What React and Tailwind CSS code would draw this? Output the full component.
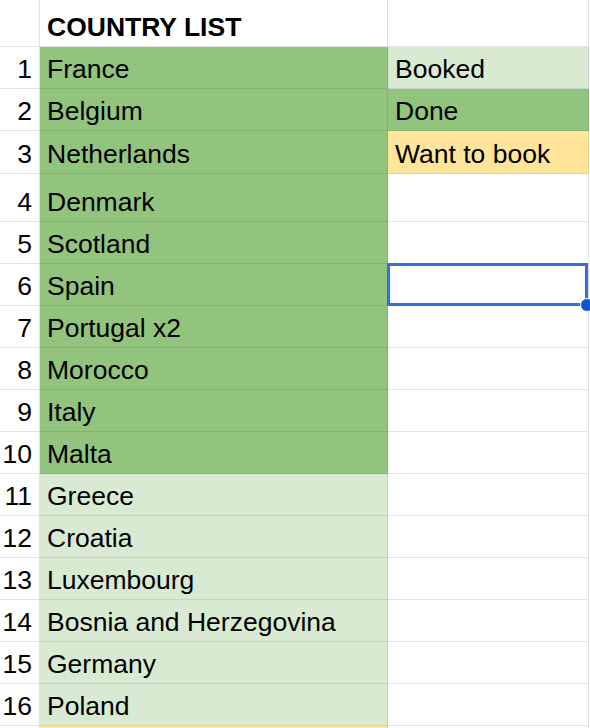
import React from "react";

const DG = "dg";
const LG = "lg";
const YL = "yl";

const rows = [
  { n: 1, b: "France", bc: DG, c: "Booked", cc: LG, h: "h-[42px]" },
  { n: 2, b: "Belgium", bc: DG, c: "Done", cc: DG, h: "h-[42px]" },
  { n: 3, b: "Netherlands", bc: DG, c: "Want to book", cc: YL, h: "h-[43px]" },
  { n: 4, b: "Denmark", bc: DG, c: "", cc: null, h: "h-[48px]" },
  { n: 5, b: "Scotland", bc: DG, c: "", cc: null, h: "h-[42px]" },
  { n: 6, b: "Spain", bc: DG, c: "", cc: null, h: "h-[42px]", sel: true },
  { n: 7, b: "Portugal x2", bc: DG, c: "", cc: null, h: "h-[42px]" },
  { n: 8, b: "Morocco", bc: DG, c: "", cc: null, h: "h-[42px]" },
  { n: 9, b: "Italy", bc: DG, c: "", cc: null, h: "h-[42px]" },
  { n: 10, b: "Malta", bc: DG, c: "", cc: null, h: "h-[42px]" },
  { n: 11, b: "Greece", bc: LG, c: "", cc: null, h: "h-[42px]" },
  { n: 12, b: "Croatia", bc: LG, c: "", cc: null, h: "h-[42px]" },
  { n: 13, b: "Luxembourg", bc: LG, c: "", cc: null, h: "h-[42px]" },
  { n: 14, b: "Bosnia and Herzegovina", bc: LG, c: "", cc: null, h: "h-[42px]" },
  { n: 15, b: "Germany", bc: LG, c: "", cc: null, h: "h-[42px]" },
  { n: 16, b: "Poland", bc: LG, c: "", cc: null, h: "h-[42px]" },
  { n: "", b: "", bc: YL, c: "", cc: null, h: "h-[42px]" },
];

function fill(kind) {
  if (kind === DG) return "bg-[#93c47d] border-[#84b36f]";
  if (kind === LG) return "bg-[#d9ead3] border-[#c5d6bf]";
  if (kind === YL) return "bg-[#ffe599] border-[#ead28a]";
  return "bg-white border-[#e2e2e2]";
}

export default function App() {
  return (
    <div
      className="w-[590px] h-[728px] overflow-hidden bg-white text-black text-[26.5px] leading-none"
      style={{ fontFamily: '"Liberation Sans", Arial, sans-serif' }}
    >
      <div className="flex h-[47px]">
        <div className="w-[40px] shrink-0 border-r border-b border-[#e2e2e2] bg-white" />
        <div className="w-[348px] shrink-0 border-r border-b border-[#e2e2e2] flex items-end pl-[7px] pb-[6px] font-bold">
          COUNTRY LIST
        </div>
        <div className="w-[201px] shrink-0 border-r border-b border-[#e2e2e2]" />
      </div>
      {rows.map((r, i) => (
        <div key={i} className={`flex ${r.h}`}>
          <div className="w-[40px] shrink-0 border-r border-b border-[#e2e2e2] flex items-end justify-end pr-[7px] pb-[6px]">
            {r.n}
          </div>
          <div
            className={`w-[348px] shrink-0 border-r border-b flex items-end pl-[7px] pb-[6px] ${fill(r.bc)}`}
          >
            {r.b}
          </div>
          <div
            className={`relative w-[201px] shrink-0 border-r border-b flex items-end pl-[7px] pb-[6px] ${fill(r.cc)}`}
          >
            {r.c}
            {r.sel && (
              <div className="absolute left-[-1px] top-[-1px] w-[201px] h-[43px] border-[3px] border-[#2f6fe2] z-10">
                <div className="absolute right-[-9px] bottom-[-9px] w-[14px] h-[14px] rounded-full bg-[#0b57d0] border border-white" />
              </div>
            )}
          </div>
        </div>
      ))}
    </div>
  );
}
